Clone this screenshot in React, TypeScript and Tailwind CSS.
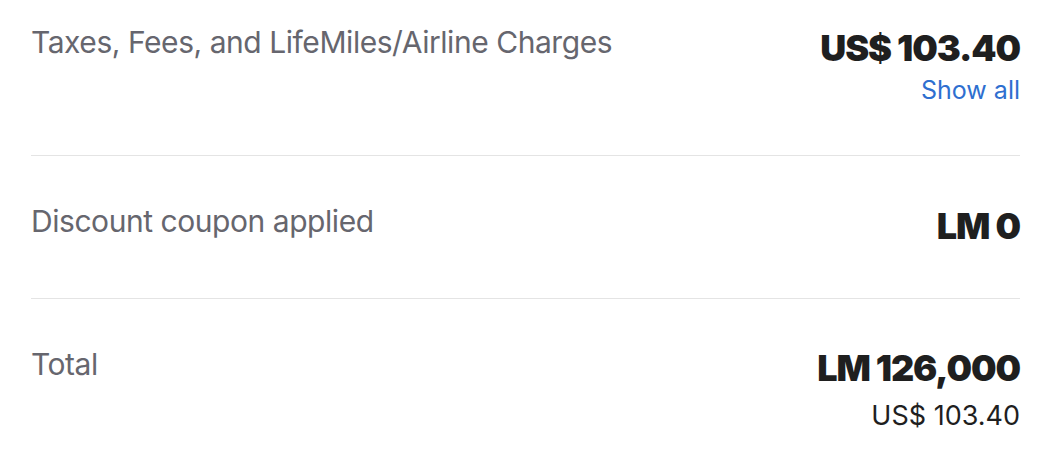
export default function App() {
  const label = "text-[30px] leading-[36px] text-[#66666e] font-['Inter',sans-serif] tracking-[-0.45px]";
  const big = "text-[36px] leading-[44px] font-black text-[#1f1f1f] font-['Inter',sans-serif] tracking-[-1.1px]";
  return (
    <div className="w-[1062px] h-[457px] bg-white pl-[31px] pr-[42px]">
      <div className="flex justify-between border-b border-[#e4e4e4] pt-[24px] pb-[50px]">
        <div className={label}>Taxes, Fees, and LifeMiles/Airline Charges</div>
        <div className="flex flex-col items-end">
          <div className={big + " mt-[2px]"}>US$ 103.40</div>
          <div className="text-[25px] leading-[30px] text-[#2e6fd0] font-['Inter',sans-serif] mt-[5px]">Show all</div>
        </div>
      </div>
      <div className="flex justify-between border-b border-[#e4e4e4] pt-[47px] pb-[50px]">
        <div className={label}>Discount coupon applied</div>
        <div className={big + " mt-[1px]"}>LM 0</div>
      </div>
      <div className="flex justify-between pt-[47px]">
        <div className={label}>Total</div>
        <div className="flex flex-col items-end">
          <div className={big}>LM 126,000</div>
          <div className="text-[27px] leading-[32px] text-[#1f1f1f] font-['Inter',sans-serif] mt-[10px]">US$ 103.40</div>
        </div>
      </div>
    </div>
  );
}
